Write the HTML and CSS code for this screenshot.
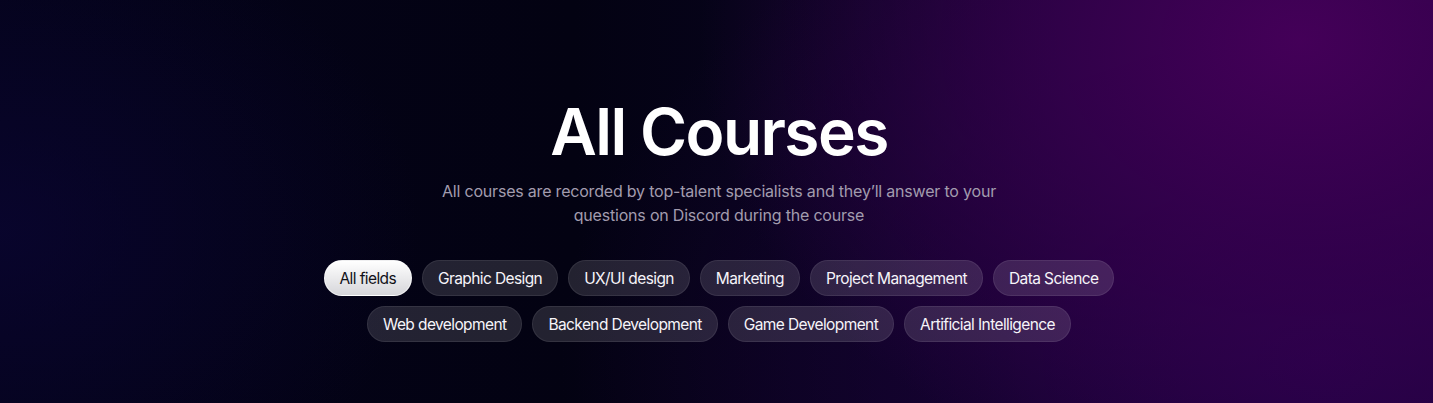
FILE: index.html
```html
<!DOCTYPE html>
<html>
<head>
<meta charset="utf-8">
<link rel="stylesheet" href="styles.css">
</head>
<body>
<section class="hero">
  <h1 class="title">All Courses</h1>
  <p class="subtitle">All courses are recorded by top-talent specialists and they’ll answer to your<br>questions on Discord during the course</p>
  <div class="pills">
    <button class="pill active">All fields</button>
    <button class="pill">Graphic Design</button>
    <button class="pill">UX/UI design</button>
    <button class="pill">Marketing</button>
    <button class="pill">Project Management</button>
    <button class="pill">Data Science</button>
    <button class="pill">Web development</button>
    <button class="pill">Backend Development</button>
    <button class="pill">Game Development</button>
    <button class="pill">Artificial Intelligence</button>
  </div>
</section>
</body>
</html>
```
FILE: styles.css
```css
html, body {
  margin: 0;
  padding: 0;
}
body {
  width: 1433px;
  height: 403px;
  overflow: hidden;
  font-family: Inter, "Noto Sans", sans-serif;
}
.hero {
  box-sizing: border-box;
  height: 403px;
  padding: 94px 0 0 5px;
  display: flex;
  flex-direction: column;
  align-items: center;
  background:
    radial-gradient(ellipse 600px 460px at 1300px 40px, rgba(70,0,90,0.95) 0%, rgba(58,0,82,0.75) 40%, rgba(40,0,70,0) 100%),
    radial-gradient(ellipse 760px 520px at 1320px 360px, rgba(38,0,72,0.95) 0%, rgba(30,0,60,0.55) 45%, rgba(20,0,50,0) 100%),
    radial-gradient(ellipse 420px 320px at 0px 230px, rgba(10,5,50,0.75) 0%, rgba(5,3,30,0) 100%),
    linear-gradient(90deg, #04031a 0%, #030212 40%, #090420 62%, #1c0538 100%);
}
.title {
  margin: 0;
  font-size: 64px;
  line-height: 76px;
  font-weight: 600;
  letter-spacing: -1.6px;
  color: #ffffff;
}
.subtitle {
  margin: 9px 0 0;
  font-size: 16px;
  line-height: 24px;
  letter-spacing: -0.2px;
  text-align: center;
  color: #a29cae;
}
.pills {
  margin-top: 33px;
  max-width: 800px;
  display: flex;
  flex-wrap: wrap;
  justify-content: center;
  gap: 10px;
}
.pill {
  height: 36px;
  padding: 0 15px;
  border-radius: 18px;
  border: 1px solid rgba(255,255,255,0.08);
  background: rgba(255,255,255,0.13);
  color: #f6f4f9;
  font-family: Inter, "Noto Sans", sans-serif;
  font-size: 15.5px;
  font-weight: 400;
  letter-spacing: -0.6px;
}
.pill.active {
  background: linear-gradient(180deg, #ffffff 0%, #d6d6da 100%);
  color: #111118;
  border-color: rgba(255,255,255,0.6);
}
```
